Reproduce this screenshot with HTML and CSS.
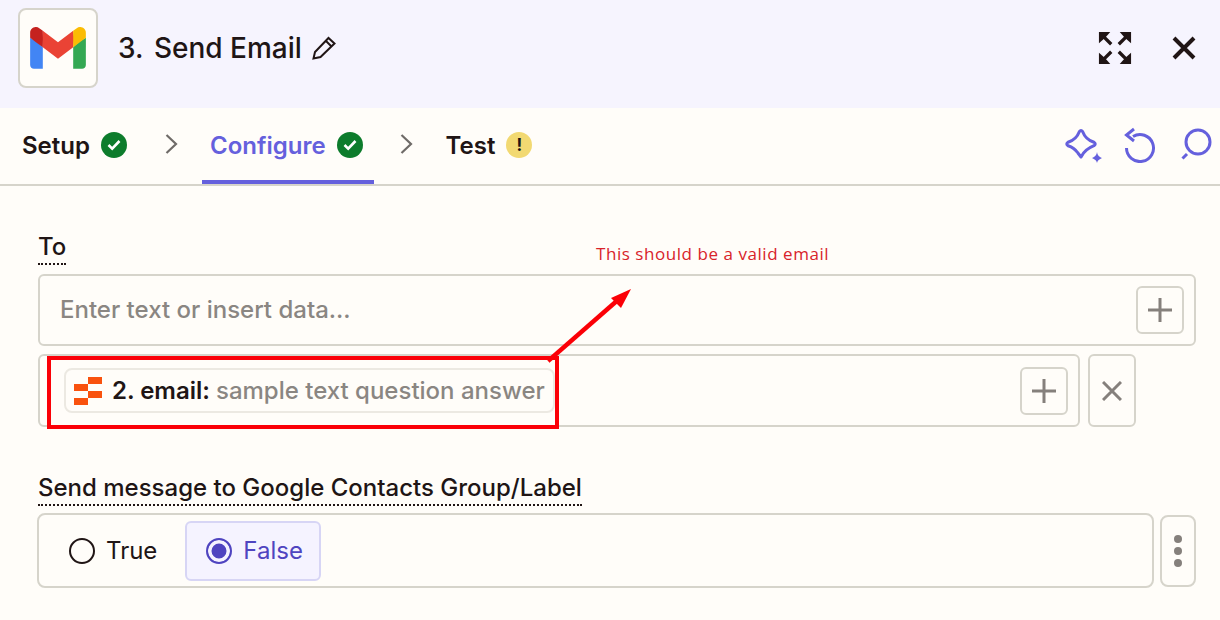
FILE: index.html
```html
<!DOCTYPE html>
<html lang="en">

<head>
    <meta charset="UTF-8">
    <meta name="viewport" content="width=device-width, initial-scale=1.0">
    <title>3. Send Email</title>
    <link rel="stylesheet" href="styles.css">
</head>

<body>

    <header class="step-header">
        <div class="app-logo">
            <svg width="56" height="42" viewBox="0 0 256 193">
                <path fill="#4285F4" d="M58.18 192.05V93.14L27.5 65.07 0 49.5v125.09c0 9.66 7.82 17.46 17.45 17.46h40.73z"/>
                <path fill="#34A853" d="M197.82 192.05h40.73c9.66 0 17.45-7.83 17.45-17.46V49.5l-31.16 17.84-27.02 25.8v98.91z"/>
                <path fill="#EA4335" d="M58.18 93.14l-4.17-38.65 4.17-37L128 69.87l69.82-52.36 4.67 35-4.67 40.63L128 145.5z"/>
                <path fill="#FBBC04" d="M197.82 17.5v75.64L256 49.5V26.18c0-21.59-24.64-33.89-41.89-20.95z"/>
                <path fill="#C5221F" d="M0 49.5l26.76 20.07L58.18 93.14V17.5L41.89 5.24C24.6-7.7 0 4.6 0 26.18z"/>
            </svg>
        </div>
        <h1 class="step-title"><span class="step-num">3.</span> Send Email</h1>
        <svg class="pencil" width="24" height="24" viewBox="0 0 24 24" fill="none" stroke="#201515" stroke-width="2">
            <path d="M1.500 22.500 L3 16 L16.500 2 L22.500 7.500 L8.500 21 Z M14 5 L19.500 10.500"/>
        </svg>
        <div class="header-actions">
            <svg width="34" height="34" viewBox="0 0 36 36" fill="#201515" stroke="#201515">
                <g stroke-width="3.500">
                    <path d="M3.500 3.500 L14 14 M32.500 3.500 L22 14 M3.500 32.500 L14 22 M32.500 32.500 L22 22"/>
                </g>
                <g stroke="none">
                    <path d="M1 1h12l-4 4.500-3.500 3.500-4.500 4z"/>
                    <path d="M35 1H23l4 4.500 3.500 3.500 4.500 4z"/>
                    <path d="M1 35h12l-4-4.500-3.500-3.500-4.500-4z"/>
                    <path d="M35 35H23l4-4.500 3.500-3.500 4.500-4z"/>
                </g>
            </svg>
            <svg class="close-icon" width="24" height="24" viewBox="0 0 24 24" stroke="#201515" stroke-width="4">
                <path d="M2 2 L22 22 M22 2 L2 22"/>
            </svg>
        </div>
    </header>

    <nav class="tabs">
        <div class="tab">
            <span>Setup</span>
            <span class="badge badge-ok">
                <svg width="14" height="12" viewBox="0 0 14 12" fill="none" stroke="#fff" stroke-width="2.600"><path d="M1.500 6 L5.200 9.600 L12.500 2"/></svg>
            </span>
        </div>
        <div class="tab-sep tab-sep-first">
            <svg width="13" height="20" viewBox="0 0 13 20" fill="none" stroke="#6f6b68" stroke-width="2.200"><path d="M1.500 1 L11 10 L1.500 19"/></svg>
        </div>
        <div class="tab tab-active">
            <span>Configure</span>
            <span class="badge badge-ok">
                <svg width="14" height="12" viewBox="0 0 14 12" fill="none" stroke="#fff" stroke-width="2.600"><path d="M1.500 6 L5.200 9.600 L12.500 2"/></svg>
            </span>
        </div>
        <div class="tab-sep">
            <svg width="13" height="20" viewBox="0 0 13 20" fill="none" stroke="#6f6b68" stroke-width="2.200"><path d="M1.500 1 L11 10 L1.500 19"/></svg>
        </div>
        <div class="tab">
            <span>Test</span>
            <span class="badge badge-warn">!</span>
        </div>
        <div class="tab-tools">
            <svg width="38" height="36" viewBox="0 0 38 36" fill="none" stroke="#6560dd" stroke-width="3" stroke-linejoin="round">
                <path d="M13.500 25.500 L17 30 C19.500 25 24 21 30 18.700 Q32.500 17 30 15.300 C24.500 13.500 20.500 9.500 18.700 4.700 Q17 2.500 15.300 4.700 C13.500 9.500 9.500 13.500 4 15.300 Q1.500 17 4 18.700 C8 20 11.500 22.500 13.500 25.500"/>
                <path fill="#6560dd" stroke="none" d="M33 25 C33.500 28 34.500 29.500 38 31 C34.500 32.500 33.500 34 33 36 C32.500 34 31.500 32.500 28 31 C31.500 29.500 32.500 28 33 25 Z"/>
            </svg>
            <svg width="32" height="36" viewBox="0 0 32 36" fill="none" stroke="#6560dd" stroke-width="3">
                <path d="M9 9.500 A13.500 13.500 0 1 1 2.500 21"/>
                <path d="M10 2 L2.500 8 L10 14"/>
            </svg>
            <svg class="tool-search" width="32" height="36" viewBox="0 0 32 36" fill="none" stroke="#6560dd" stroke-width="3">
                <circle cx="18" cy="15" r="12"/>
                <path d="M2.500 31.500 L7 27"/>
            </svg>
        </div>
    </nav>

    <form class="form-body">
        <div class="form-group">
            <label class="field-label">To</label>
            <div class="field-box field-full">
                <span class="placeholder">Enter text or insert data...</span>
                <button type="button" class="icon-btn">
                    <svg width="24" height="24" viewBox="0 0 24 24" stroke="#85807c" stroke-width="3"><path d="M12 0 V24 M0 12 H24"/></svg>
                </button>
            </div>
            <div class="field-row">
                <div class="field-box field-grow">
                    <span class="chip">
                        <svg width="28" height="28" viewBox="0 0 28 28" fill="#f9520e"><path d="M14 0h14v7H14zM0 7h14v7H0zM14 14h14v7H14zM0 21h14v7H0z"/></svg>
                        <b>2. email:</b> <span class="chip-value">sample text question answer</span>
                    </span>
                    <button type="button" class="icon-btn">
                        <svg width="24" height="24" viewBox="0 0 24 24" stroke="#85807c" stroke-width="3"><path d="M12 0 V24 M0 12 H24"/></svg>
                    </button>
                </div>
                <button type="button" class="side-btn side-remove">
                    <svg width="20" height="20" viewBox="0 0 20 20" stroke="#85807c" stroke-width="3"><path d="M1 1 L19 19 M19 1 L1 19"/></svg>
                </button>
            </div>
        </div>

        <div class="form-group form-group-radio">
            <label class="field-label">Send message to Google Contacts Group/Label</label>
            <div class="field-row field-row-radio">
                <div class="radio-box">
                    <div class="radio-item">
                        <span class="radio"></span>
                        <span>True</span>
                    </div>
                    <div class="radio-item radio-selected">
                        <span class="radio"></span>
                        <span>False</span>
                    </div>
                </div>
                <button type="button" class="side-btn side-more">
                    <span></span><span></span><span></span>
                </button>
            </div>
        </div>
    </form>

    <!-- red annotation drawn over the screenshot -->
    <div class="note-box"></div>
    <svg class="note-arrow" width="90" height="80" viewBox="0 0 90 80">
        <path d="M1 75 L72 13" stroke="#fb0007" stroke-width="4.500"/>
        <path d="M84 3 L64 12 L74 22 Z" fill="#fb0007"/>
    </svg>
    <p class="note-text">This should be a valid email</p>

</body>

</html>
```

FILE: styles.css
```css
/* Reset some default styles */
* {
    margin: 0;
    padding: 0;
    box-sizing: border-box;
}

body {
    font-family: 'Inter', sans-serif;
    background-color: #fffdf9;
    color: #201515;
    overflow: hidden;
}

/* Header */
.step-header {
    display: flex;
    align-items: center;
    height: 108px;
    padding: 0 24px 12px 18px;
    background-color: #f6f4fe;
}

.app-logo {
    display: flex;
    align-items: center;
    justify-content: center;
    width: 80px;
    height: 80px;
    background-color: #fffdf9;
    border: 2px solid #d6d4cb;
    border-radius: 8px;
}

.step-title {
    margin-left: 20px;
    font-size: 28px;
    font-weight: 500;
}

.step-num {
    margin-right: 3px;
}

.pencil {
    margin-left: 10px;
}

.header-actions {
    display: flex;
    align-items: center;
    margin-left: auto;
}

.close-icon {
    margin-left: 40px;
}

/* Tabs */
.tabs {
    display: flex;
    align-items: stretch;
    height: 78px;
    padding: 0 8px 0 14px;
    border-bottom: 2px solid #d6d4cb;
}

.tab {
    display: flex;
    align-items: center;
    gap: 11px;
    height: 76px;
    padding: 2px 11px 0 8px;
    font-size: 24px;
    font-weight: 600;
    border-bottom: 4px solid transparent;
}

.tab-active {
    color: #6560dd;
    border-bottom-color: #6560dd;
}

.tab-sep {
    display: flex;
    align-items: center;
    justify-content: center;
    width: 64px;
    padding: 0 0 4px 1px;
}

.tab-sep-first {
    padding-left: 4px;
}

.badge {
    display: flex;
    align-items: center;
    justify-content: center;
    width: 26px;
    height: 26px;
    border-radius: 50%;
}

.badge-ok {
    background-color: #0d7c2c;
}

.badge-warn {
    background-color: #f2d972;
    color: #201515;
    font-size: 17px;
    font-weight: 700;
}

.tab-tools {
    display: flex;
    align-items: center;
    gap: 22px;
    margin-left: auto;
    padding-bottom: 2px;
}

.tool-search {
    margin-left: 2px;
}

/* Form */
.form-body {
    padding: 46px 24px 0 38px;
}

.form-group {
    display: flex;
    flex-direction: column;
    align-items: flex-start;
}

.form-group-radio {
    margin-top: 46px;
}

.field-label {
    height: 33px;
    margin-bottom: 9px;
    font-size: 24px;
    font-weight: 500;
    line-height: 30px;
    border-bottom: 2px dotted #201515;
}

.form-group-radio .field-label {
    margin-bottom: 7px;
}

.field-box {
    display: flex;
    align-items: center;
    justify-content: space-between;
    background-color: #fffdf9;
    border: 2px solid #d6d4cb;
    border-radius: 6px;
}

.field-full {
    width: 100%;
    height: 72px;
    padding: 0 10px 0 20px;
}

.placeholder {
    margin-bottom: 2px;
    font-size: 24px;
    font-weight: 500;
    color: #8a8682;
}

.icon-btn {
    display: flex;
    align-items: center;
    justify-content: center;
    width: 48px;
    height: 48px;
    background: none;
    border: 2px solid #d6d4cb;
    border-radius: 6px;
}

.field-row {
    display: flex;
    gap: 8px;
    width: 100%;
    height: 73px;
    margin-top: 8px;
    padding-right: 60px;
}

.field-grow {
    flex: 1;
    padding: 0 10px 0 24px;
}

.chip {
    display: flex;
    align-items: center;
    height: 45px;
    padding: 0 8px;
    font-size: 24px;
    font-weight: 600;
    border: 2px solid #ece9e2;
    border-radius: 8px;
    white-space: nowrap;
}

.chip b {
    margin-left: 10px;
    margin-right: 6px;
    font-weight: 600;
}

.chip-value {
    font-weight: 500;
    color: #8a8682;
}

.side-btn {
    display: flex;
    align-items: center;
    justify-content: center;
    background: none;
    border: 2px solid #d6d4cb;
    border-radius: 6px;
}

.side-remove {
    width: 48px;
}

/* Radio row */
.field-row-radio {
    gap: 6px;
    width: calc(100% + 1px);
    height: 75px;
    margin-top: 0;
    margin-left: -1px;
    padding-right: 0;
}

.radio-box {
    display: flex;
    flex: 1;
    align-items: center;
    gap: 10px;
    padding: 0 14px;
    border: 2px solid #d6d4cb;
    border-radius: 8px;
}

.radio-item {
    display: flex;
    align-items: center;
    gap: 11px;
    height: 60px;
    font-size: 24px;
    padding: 0 16px 0 14px;
    border: 2px solid transparent;
    border-radius: 6px;
}

.radio {
    width: 26px;
    height: 26px;
    border: 2.500px solid #201515;
    border-radius: 50%;
}

.radio-selected {
    padding: 0 16px 0 19px;
    color: #4f44c0;
    background-color: #f5f3ff;
    border-color: #d7d5f5;
}

.radio-selected .radio {
    border-color: #4f44c0;
    background-color: #4f44c0;
    box-shadow: inset 0 0 0 3.500px #f5f3ff;
}

.side-more {
    flex-direction: column;
    gap: 4px;
    width: 36px;
    height: 72px;
    margin-top: 2px;
    border-radius: 8px;
}

.side-more span {
    width: 8px;
    height: 8px;
    background-color: #85807c;
    border-radius: 50%;
}

/* Annotation */
.note-box {
    position: absolute;
    left: 47px;
    top: 356px;
    width: 512px;
    height: 73px;
    border: 4px solid #fb0007;
}

.note-arrow {
    position: absolute;
    left: 547px;
    top: 286px;
}

.note-text {
    position: absolute;
    left: 596px;
    top: 242px;
    font-family: 'Open Sans', sans-serif;
    font-size: 17px;
    letter-spacing: 0.55px;
    color: #d8232a;
}
```
